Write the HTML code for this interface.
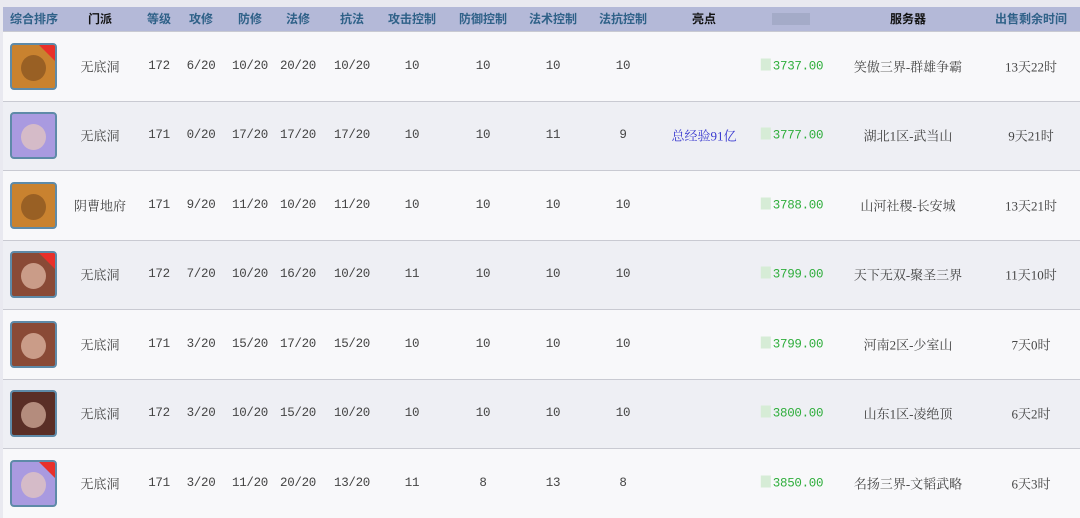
<!DOCTYPE html>
<html><head><meta charset="utf-8"><style>
body{margin:0;width:1080px;height:512px;overflow:hidden;background:#e9e9f0;font-family:"Liberation Serif","Noto Serif CJK SC",serif;}
.hd{position:absolute;left:3px;top:7px;width:1077px;height:24px;background:#b4b9d8;}
.h{position:absolute;top:7px;height:24px;line-height:24px;font-size:12px;font-weight:bold;color:#2f6188;transform:translateX(-50%);white-space:nowrap;font-family:"Liberation Sans","Noto Sans CJK SC",sans-serif;}
.h.k{color:#111}
.row{position:absolute;left:3px;width:1077px;border-top:1px solid #c9cad2;}
.c{position:absolute;font-size:13px;color:#444;transform:translate(-50%,-50%);white-space:nowrap;}
.n{font-family:"Liberation Mono",monospace;font-size:12.5px;letter-spacing:-0.3px}
.g{color:#2fae3c}
.av{position:absolute;left:10px;width:43px;height:43px;border:2px solid #5e8aa8;border-radius:4px;overflow:hidden}
.hot{position:absolute;right:-2px;top:-2px;width:0;height:0;border-top:20px solid #e8302a;border-left:20px solid transparent;}
.fc{position:absolute;left:9px;top:10px;width:25px;height:26px;border-radius:50%;opacity:.6}
.sw{display:inline-block;width:10px;height:12px;background:#d6ecd6;vertical-align:-1px;margin-right:2px}
</style></head><body>
<div class="hd"></div>
<div class="h" style="left:34px">综合排序</div>
<div class="h k" style="left:100px">门派</div>
<div class="h" style="left:159px">等级</div>
<div class="h" style="left:201px">攻修</div>
<div class="h" style="left:250px">防修</div>
<div class="h" style="left:298px">法修</div>
<div class="h" style="left:352px">抗法</div>
<div class="h" style="left:412px">攻击控制</div>
<div class="h" style="left:483px">防御控制</div>
<div class="h" style="left:553px">法术控制</div>
<div class="h" style="left:623px">法抗控制</div>
<div class="h k" style="left:704px">亮点</div>
<div style="position:absolute;left:772px;top:13px;width:38px;height:12px;background:#9aa2be;opacity:.6"></div>
<div class="h k" style="left:908px">服务器</div>
<div class="h" style="left:1031px">出售剩余时间</div>
<div id="rows"></div>
<script>
var d=[
["无底洞","172","6/20","10/20","20/20","10/20","10","10","10","10","","3737.00","笑傲三界-群雄争霸","13天22时","#c9822f",1,"#7a4a1e"],
["无底洞","171","0/20","17/20","17/20","17/20","10","10","11","9","总经验91亿","3777.00","湖北1区-武当山","9天21时","#a99ae0",0,"#f3d2b8"],
["阴曹地府","171","9/20","11/20","10/20","11/20","10","10","10","10","","3788.00","山河社稷-长安城","13天21时","#c9822f",0,"#7a4a1e"],
["无底洞","172","7/20","10/20","16/20","10/20","11","10","10","10","","3799.00","天下无双-聚圣三界","11天10时","#8a4a36",1,"#f5d3c0"],
["无底洞","171","3/20","15/20","17/20","15/20","10","10","10","10","","3799.00","河南2区-少室山","7天0时","#8a4a36",0,"#f5d3c0"],
["无底洞","172","3/20","10/20","15/20","10/20","10","10","10","10","","3800.00","山东1区-凌绝顶","6天2时","#5a2e26",0,"#f0cbb8"],
["无底洞","171","3/20","11/20","20/20","13/20","11","8","13","8","","3850.00","名扬三界-文韬武略","6天3时","#a99ae0",1,"#f3d2b8"]];
var xs=[100,159,201,250,298,352,412,483,553,623,704,0,908,1031];
var h="";
for(var i=0;i<7;i++){var t=31+i*69.5,c=t+34.5,r=d[i];
h+='<div class="row" style="top:'+t+'px;height:69px;background:'+(i%2?'#eeeff4':'#f8f8fa')+'"></div>';
h+='<div class="av" style="top:'+(c-23)+'px;background:'+r[14]+'"><div class="fc" style="background:'+r[16]+'"></div>'+(r[15]?'<div class="hot"></div>':'')+'</div>';
for(var j=0;j<14;j++){if(j==11){h+='<div class="c g n" style="left:792px;top:'+c+'px"><span class="sw"></span>'+r[11]+'</div>';continue;}
var cls=(j>=1&&j<=9)?'c n':'c';
h+='<div class="'+cls+'" style="left:'+xs[j]+'px;top:'+c+'px;'+(j==10?'color:#3a3ad0':'')+'">'+r[j]+'</div>';}}
document.getElementById('rows').innerHTML=h;
</script>
</body></html>
